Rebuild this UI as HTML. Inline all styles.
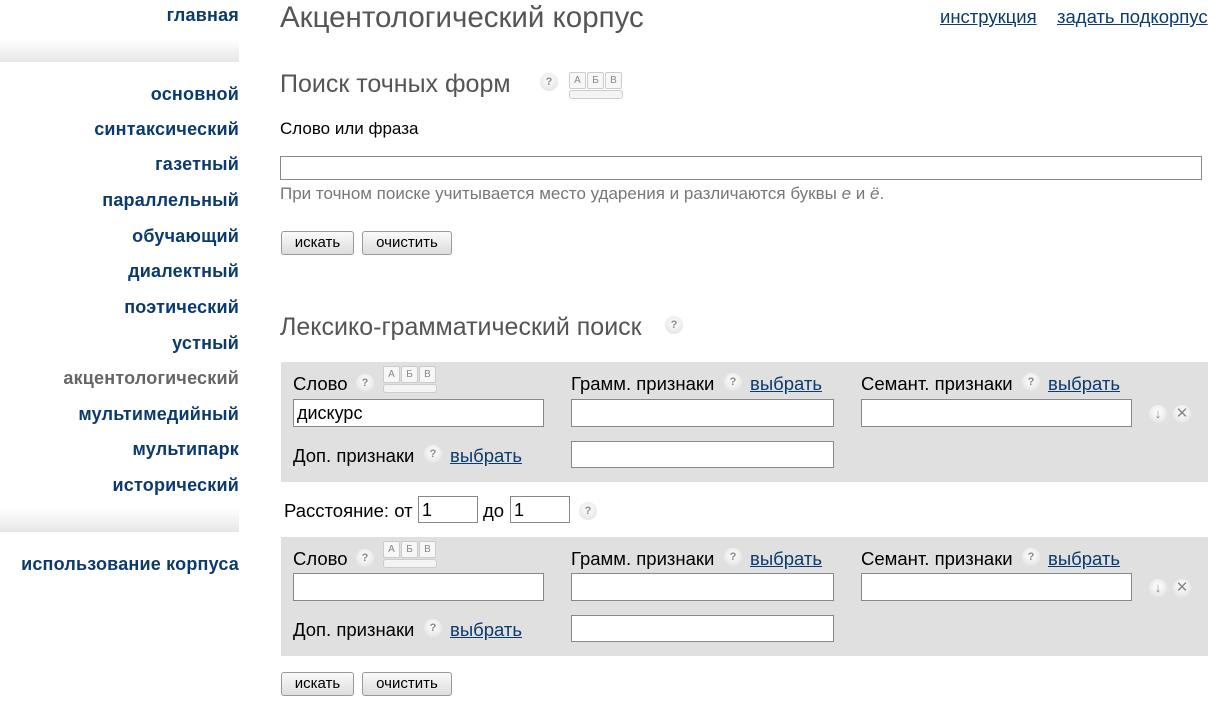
<!DOCTYPE html>
<html><head><meta charset="utf-8"><style>
*{margin:0;padding:0;box-sizing:border-box}
body{width:1222px;height:704px;background:#fff;font-family:"Liberation Sans",Arial,sans-serif;position:relative;overflow:hidden}
.a{position:absolute;white-space:nowrap}
.nav{right:983px;font-weight:bold;font-size:18px;color:#0b3a6e;line-height:20px;letter-spacing:0.2px}
.band{position:absolute;left:0;width:239px;background:linear-gradient(#fff,#e6e6e6)}
.lab{font-size:18.5px;color:#000;line-height:20px}
.a.lnk{color:#0b3a6e;text-decoration:underline}
.inp{position:absolute;background:#fff;border:1px solid #888;font-size:18px;padding-left:3px;line-height:26px}
.btn{position:absolute;height:24px;border:1px solid #999;border-radius:3px;background:linear-gradient(#fafafa,#ddd);font-size:15px;text-align:center;line-height:22px}
.q{position:absolute;width:18px;height:18px;border-radius:50%;background:radial-gradient(circle at 50% 40%,#fff,#ddd);color:#888;font-size:11px;text-align:center;line-height:18px;font-weight:bold}
.kb{position:absolute;width:56px;height:28px}
.kb span{position:absolute;top:0;width:17px;height:17px;border:1px solid #ccc;border-radius:2px;background:#f7f7f7;font-size:10px;color:#888;text-align:center;line-height:16px}
.kb i{position:absolute;left:1px;right:1px;top:18px;height:9px;border:1px solid #ccc;border-radius:3px;background:#f4f4f4}
.box{position:absolute;left:281px;width:927px;background:#e0e0e0}
</style></head><body>
<div class="band" style="top:40px;height:22px"></div>
<div class="band" style="top:508px;height:24px"></div>
<div class="a nav" style="top:5px">главная</div>
<div class="a nav" style="top:84px">основной</div>
<div class="a nav" style="top:119px">синтаксический</div>
<div class="a nav" style="top:154px">газетный</div>
<div class="a nav" style="top:190px">параллельный</div>
<div class="a nav" style="top:226px">обучающий</div>
<div class="a nav" style="top:261px">диалектный</div>
<div class="a nav" style="top:297px">поэтический</div>
<div class="a nav" style="top:333px">устный</div>
<div class="a nav" style="top:368px;color:#666">акцентологический</div>
<div class="a nav" style="top:404px">мультимедийный</div>
<div class="a nav" style="top:439px">мультипарк</div>
<div class="a nav" style="top:475px">исторический</div>
<div class="a nav" style="top:554px">использование корпуса</div>

<div class="a" style="left:280px;top:1px;font-size:29.5px;color:#555">Акцентологический корпус</div>
<div class="a lnk" style="left:940px;top:6px;font-size:18.5px">инструкция</div>
<div class="a lnk" style="left:1057px;top:6px;font-size:18.5px">задать подкорпус</div>

<div class="a" style="left:280px;top:70px;font-size:25px;color:#555">Поиск точных форм</div>
<div class="q" style="left:540px;top:73px">?</div>
<div class="kb" style="left:568px;top:72px"><span style="left:1px">А</span><span style="left:19px">Б</span><span style="left:37px">В</span><i></i></div>
<div class="a" style="left:280px;top:119px;font-size:17px">Слово или фраза</div>
<div class="inp" style="left:280px;top:156px;width:922px;height:24px"></div>
<div class="a" style="left:280px;top:184px;font-size:17px;color:#777">При точном поиске учитывается место ударения и различаются буквы <i>е</i> и <i>ё</i>.</div>
<div class="btn" style="left:281px;top:231px;width:73px">искать</div>
<div class="btn" style="left:362px;top:231px;width:90px">очистить</div>

<div class="a" style="left:280px;top:313px;font-size:25px;color:#555">Лексико-грамматический поиск</div>
<div class="q" style="left:665px;top:316px">?</div>

<div class="box" style="top:362px;height:120px"></div>
<div class="a lab" style="left:293px;top:374px">Слово</div>
<div class="q" style="left:356px;top:374px">?</div>
<div class="kb" style="left:382px;top:366px"><span style="left:1px">А</span><span style="left:19px">Б</span><span style="left:37px">В</span><i></i></div>
<div class="a lab" style="left:571px;top:374px">Грамм. признаки</div>
<div class="q" style="left:724px;top:373px">?</div>
<div class="a lab lnk" style="left:750px;top:374px">выбрать</div>
<div class="a lab" style="left:861px;top:374px">Семант. признаки</div>
<div class="q" style="left:1022px;top:373px">?</div>
<div class="a lab lnk" style="left:1048px;top:374px">выбрать</div>
<div class="inp" style="left:293px;top:399px;width:251px;height:28px">дискурс</div>
<div class="inp" style="left:571px;top:399px;width:263px;height:28px"></div>
<div class="inp" style="left:861px;top:399px;width:271px;height:28px"></div>
<div class="q" style="left:1149px;top:405px;font-size:13px">↓</div>
<div class="q" style="left:1173px;top:405px;font-size:15px;font-weight:normal">✕</div>
<div class="a lab" style="left:293px;top:446px">Доп. признаки</div>
<div class="q" style="left:424px;top:445px">?</div>
<div class="a lab lnk" style="left:450px;top:446px">выбрать</div>
<div class="inp" style="left:571px;top:441px;width:263px;height:27px"></div>

<div class="a lab" style="left:284px;top:501px">Расстояние: от</div>
<div class="inp" style="left:418px;top:496px;width:60px;height:27px">1</div>
<div class="a lab" style="left:483px;top:501px">до</div>
<div class="inp" style="left:510px;top:496px;width:60px;height:27px">1</div>
<div class="q" style="left:579px;top:502px">?</div>

<div class="box" style="top:537px;height:119px"></div>
<div class="a lab" style="left:293px;top:549px">Слово</div>
<div class="q" style="left:356px;top:549px">?</div>
<div class="kb" style="left:382px;top:541px"><span style="left:1px">А</span><span style="left:19px">Б</span><span style="left:37px">В</span><i></i></div>
<div class="a lab" style="left:571px;top:549px">Грамм. признаки</div>
<div class="q" style="left:724px;top:548px">?</div>
<div class="a lab lnk" style="left:750px;top:549px">выбрать</div>
<div class="a lab" style="left:861px;top:549px">Семант. признаки</div>
<div class="q" style="left:1022px;top:548px">?</div>
<div class="a lab lnk" style="left:1048px;top:549px">выбрать</div>
<div class="inp" style="left:293px;top:573px;width:251px;height:28px"></div>
<div class="inp" style="left:571px;top:573px;width:263px;height:28px"></div>
<div class="inp" style="left:861px;top:573px;width:271px;height:28px"></div>
<div class="q" style="left:1149px;top:579px;font-size:13px">↓</div>
<div class="q" style="left:1173px;top:579px;font-size:15px;font-weight:normal">✕</div>
<div class="a lab" style="left:293px;top:620px">Доп. признаки</div>
<div class="q" style="left:424px;top:619px">?</div>
<div class="a lab lnk" style="left:450px;top:620px">выбрать</div>
<div class="inp" style="left:571px;top:615px;width:263px;height:27px"></div>

<div class="btn" style="left:281px;top:672px;width:73px">искать</div>
<div class="btn" style="left:362px;top:672px;width:90px">очистить</div>
</body></html>
